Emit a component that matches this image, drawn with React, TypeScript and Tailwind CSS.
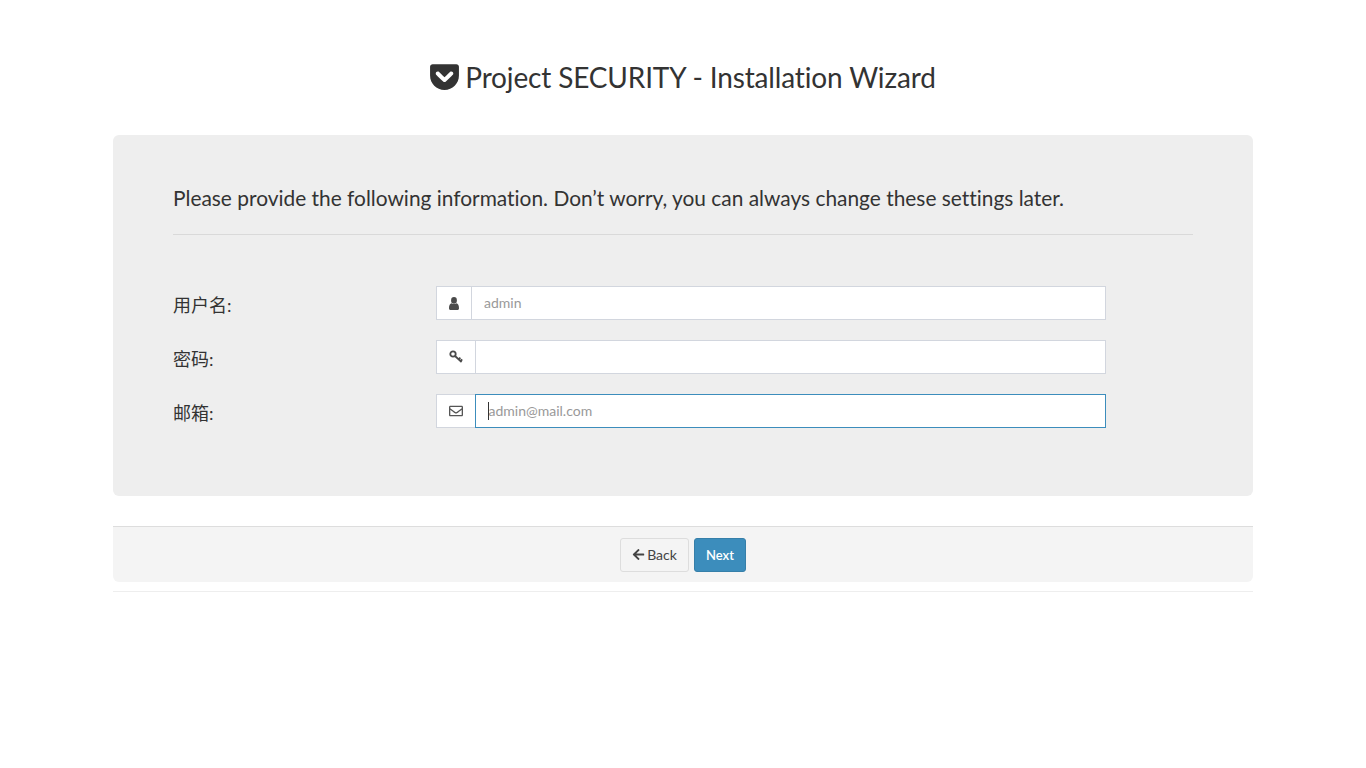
import React from "react";
import { FaGetPocket, FaRegEnvelope, FaArrowLeft } from "react-icons/fa";

const font = { fontFamily: '"Lato", "Noto Sans CJK SC", sans-serif' };

function UserIcon() {
  return (
    <svg width="10" height="13" viewBox="0 0 10 13" fill="#4a4a4a">
      <ellipse cx="5" cy="3.4" rx="2.9" ry="3.3" />
      <path d="M0 11.2 C0 8.2 1 6.6 2.6 6.2 C4 7.4 6 7.4 7.4 6.2 C9 6.6 10 8.2 10 11.2 C10 12.3 9.3 13 8.4 13 H1.6 C0.7 13 0 12.3 0 11.2 Z" />
    </svg>
  );
}

function KeyIcon() {
  return (
    <svg width="14" height="14" viewBox="0 0 14 14" fill="none" stroke="#4a4a4a" strokeWidth="1.8">
      <circle cx="4" cy="4" r="2.7" />
      <path d="M6 6 L12.6 12 M9.6 9.4 L11.4 7.6 M11.6 11 L13.2 9.4" />
    </svg>
  );
}

function Row({ label, icon, addon, placeholder, focused }: { label: string; icon: React.ReactNode; addon: string; placeholder?: string; focused?: boolean }) {
  return (
    <div className="flex h-[34px]">
      <label className="w-[263px] pt-[6px] text-[18px] leading-[26px] text-[#333]">{label}</label>
      <div className="flex w-[670px]">
        <span className={`flex ${addon} items-center justify-center border border-r-0 border-[#d2d6de] bg-white text-[#4a4a4a]`}>{icon}</span>
        <div className="relative flex-1">
          <input
            readOnly
            placeholder={placeholder}
            className={`h-[34px] w-full border bg-white pb-[2px] pr-3 text-[14px] outline-none placeholder:text-[#999] ${focused ? "border-[#3c8dbc] pl-[12.5px]" : "border-[#d2d6de] pl-3"}`}
            style={font}
          />
          {focused && <span className="absolute left-[13px] top-[8px] h-[18px] w-px bg-[#333]" />}
        </div>
      </div>
    </div>
  );
}

export default function App() {
  return (
    <div className="min-h-[768px] bg-white [font-variant-ligatures:none]" style={font}>
      <div className="mx-auto w-[1140px]">
        <h1 className="flex h-[135px] items-start justify-center pr-[2px] pt-[58px] text-[28px] font-normal leading-[38px] tracking-[-0.15px] text-[#333]">
          <FaGetPocket className="mr-[4px] mt-[2px] text-[33px]" />
          Project SECURITY - Installation Wizard
        </h1>
        <div className="h-[361px] rounded-md bg-[#eeeeee] px-[60px] pt-[49px]">
          <p className="h-[50px] text-[20.9px] leading-[27px] text-[#333]">Please provide the following information. Don’t worry, you can always change these settings later.</p>
          <div className="border-t border-[#d9d9d9]" />
          <div className="mt-[51px] flex flex-col gap-5">
            <Row label="用户名:" icon={<UserIcon />} addon="w-[35px]" placeholder="admin" />
            <Row label="密码:" icon={<KeyIcon />} addon="w-[39px]" />
            <Row label="邮箱:" icon={<FaRegEnvelope className="mr-[1px] text-[14px] text-[#555]" />} addon="w-[39px]" placeholder="admin@mail.com" focused />
          </div>
        </div>
        <div className="mt-[30px] flex h-[56px] items-start justify-center gap-[5px] rounded-b-md border-t border-[#dddddd] bg-[#f4f4f4] pt-[11px]">
          <button className="flex h-[34px] w-[69px] items-center justify-center gap-[2px] rounded-[3px] border border-[#dddddd] bg-[#f4f4f4] pb-[1px] text-[14px] text-[#444]">
            <FaArrowLeft className="text-[13px]" />Back
          </button>
          <button className="h-[34px] w-[52px] rounded-[3px] border border-[#367fa9] bg-[#3c8dbc] pt-[1px] text-[13px] font-semibold text-white">Next</button>
        </div>
        <div className="mt-[9px] border-t border-[#eeeeee]" />
      </div>
    </div>
  );
}
